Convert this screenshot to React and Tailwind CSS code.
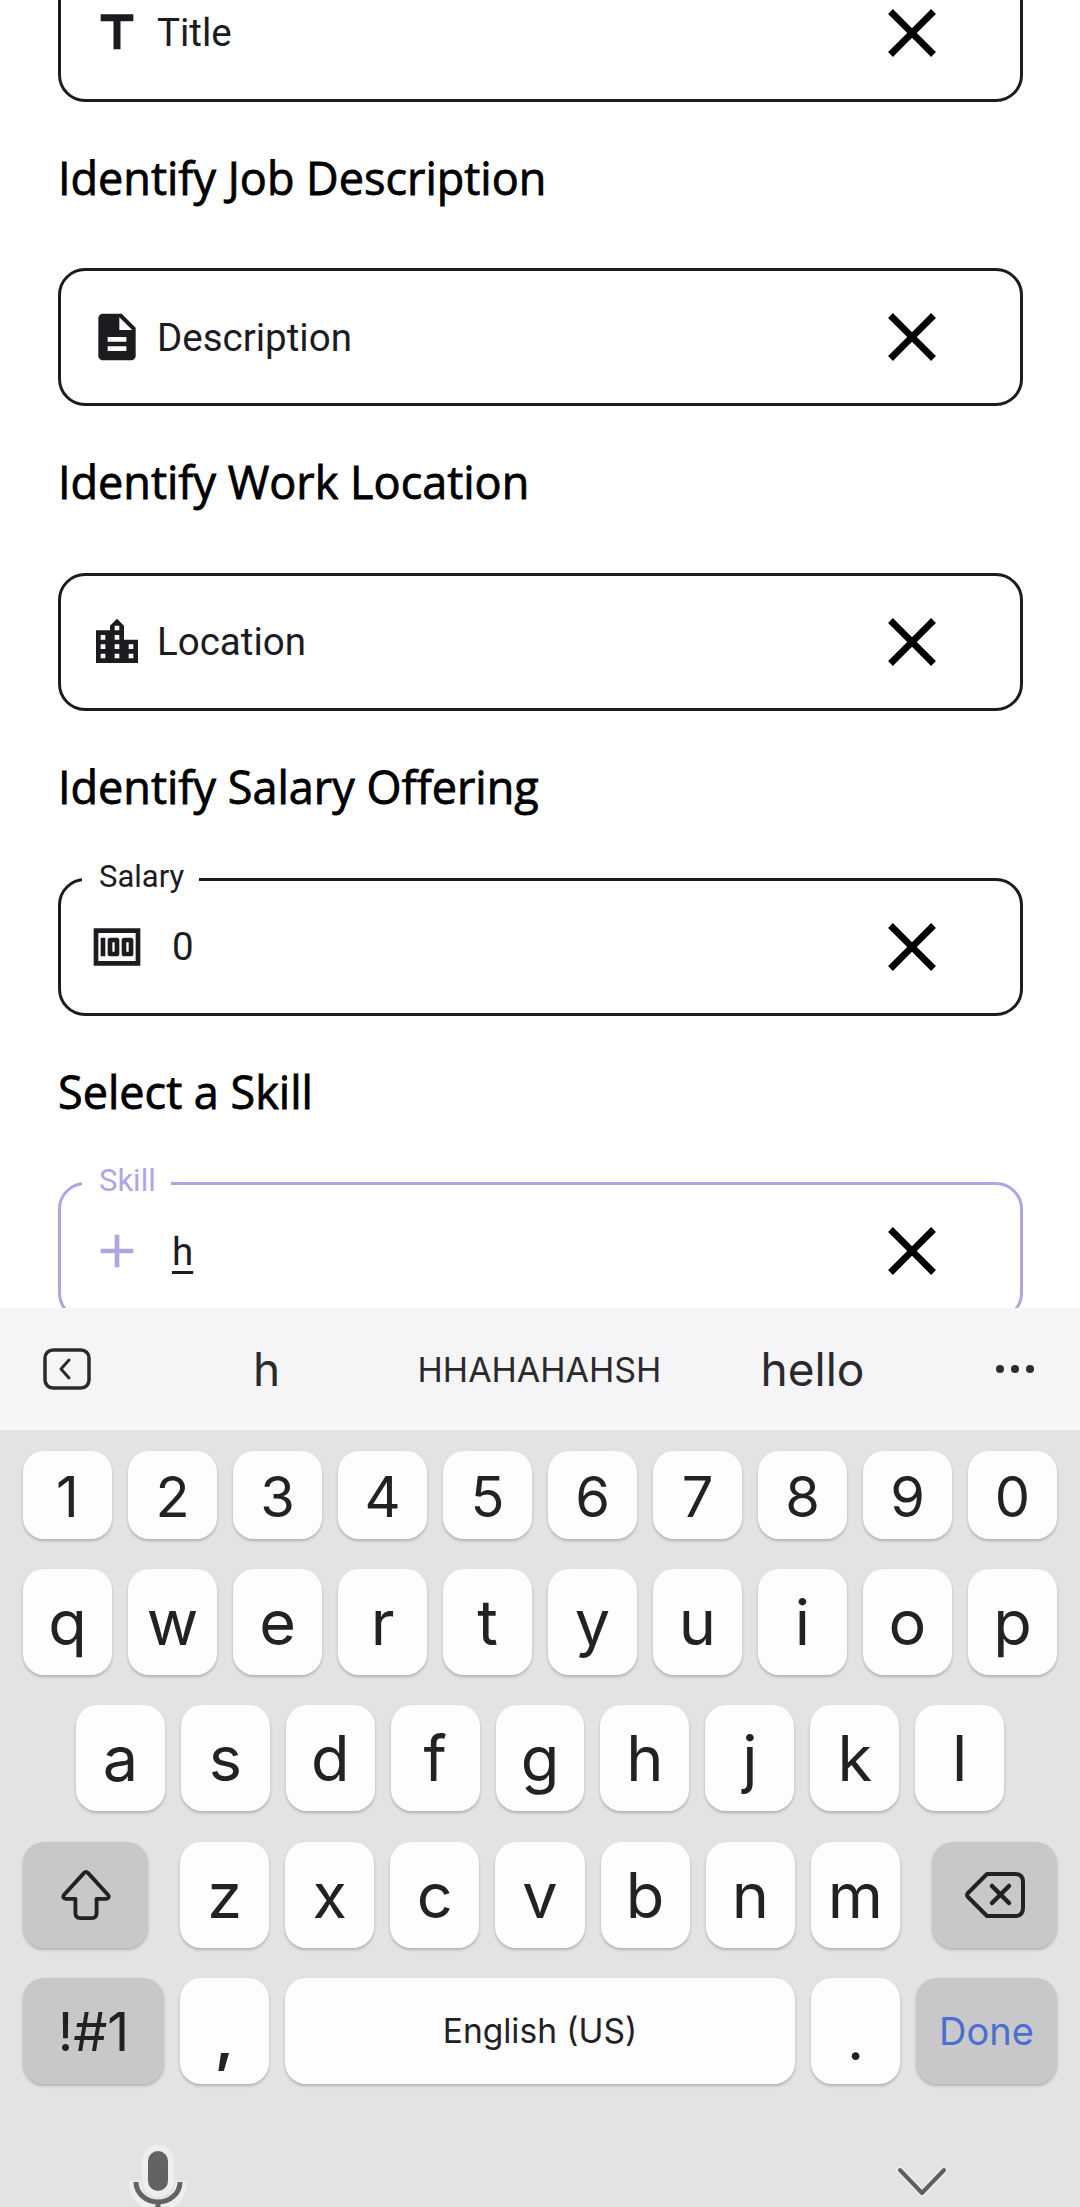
import { MdClose, MdTitle, MdDescription, MdLocationCity, MdMoney, MdAdd } from 'react-icons/md';

function Field({ icon: Icon, text, label, focused, clip }) {
  const isValue = Boolean(label);
  return (
    <div
      className={`relative flex items-center justify-between h-[138px] rounded-[27px] border-[3px] pl-[28px] pr-[67px] ${
        focused ? 'border-[#b0a5e0]' : 'border-[#1c1b1f]'
      }`}
    >
      {label && (
        <span
          className={`absolute left-[21px] top-[-21px] bg-white pl-[17px] pr-[15px] h-[36px] leading-[34px] text-[31px] ${
            focused ? 'text-[#b0a5e0]' : 'text-[#1c1b1f]'
          }`}
        >
          {label}
        </span>
      )}
      <div className="flex items-center">
        <Icon size={56} className={focused ? 'text-[#b0a5e0]' : 'text-[#1c1b1f]'} />
        <span
          className={`text-[38.5px] text-[#1c1b1f] ${isValue ? 'ml-[27px]' : 'ml-[12px]'} ${clip ? 'underline underline-offset-[6px]' : ''}`}
        >
          {text}
        </span>
      </div>
      <MdClose size={82} className="text-black" />
    </div>
  );
}

function Heading({ children }) {
  return (
    <h2 className="h-[166.7px] pt-[46px] text-[45px] leading-[60px] font-medium text-black font-['Open_Sans',sans-serif] [-webkit-text-stroke:0.8px_#000]">
      {children}
    </h2>
  );
}

function Key({ children, className = '', mod }) {
  return (
    <div
      className={`flex items-center justify-center rounded-[21px] text-[#222225] shadow-[0_2px_3px_rgba(0,0,0,0.22)] ${
        mod ? 'bg-[#c8c8ca]' : 'bg-[#fdfdfe]'
      } ${className}`}
    >
      {children}
    </div>
  );
}

function KeyRow({ keys, className }) {
  return (
    <div className={`flex gap-[16px] h-[106px] ${className}`}>
      {keys.map((k) => (
        <Key key={k} className="flex-1 text-[63px]">
          {k}
        </Key>
      ))}
    </div>
  );
}

function ShiftIcon() {
  return (
    <svg width="50" height="52" viewBox="0 0 52 54" fill="none" stroke="#222225" strokeWidth="4" strokeLinejoin="round">
      <path d="M26 3 Q27 3 28 4 L49 27 Q51 30 47 31 H37 V46 Q37 51 32 51 H20 Q15 51 15 46 V31 H5 Q1 30 3 27 L24 4 Q25 3 26 3 Z" />
    </svg>
  );
}

function BackspaceIcon() {
  return (
    <svg width="60" height="46" viewBox="0 0 60 46" fill="none" stroke="#222225" strokeWidth="4" strokeLinejoin="round" strokeLinecap="round">
      <path d="M22 2 H50 Q58 2 58 10 V36 Q58 44 50 44 H22 L3 25 Q1 23 3 21 Z" />
      <path d="M27 14 L44 31 M44 14 L27 31" strokeWidth="4.5" />
    </svg>
  );
}

function MicIcon() {
  return (
    <svg width="60" height="62" viewBox="0 0 60 62">
      <g fill="none" stroke="#eeeeef" strokeWidth="12">
        <rect x="20" y="6" width="20" height="40" rx="10" fill="#eeeeef" />
        <path d="M7 36 V38 A23 23 0 0 0 53 38 V36" />
        <path d="M30 60 V62" />
      </g>
      <rect x="20" y="6" width="20" height="40" rx="10" fill="#636363" />
      <path d="M8 37 A22 20 0 0 0 52 37" fill="none" stroke="#636363" strokeWidth="5" />
      <path d="M30 56 V62" stroke="#636363" strokeWidth="5" />
    </svg>
  );
}

function ChevronIcon() {
  return (
    <svg width="54" height="34" viewBox="0 0 54 34" fill="none" strokeLinecap="round" strokeLinejoin="round">
      <path d="M5 5 L27 28 L49 5" stroke="#eeeeef" strokeWidth="7" />
      <path d="M5 5 L27 28 L49 5" stroke="#5f5f5f" strokeWidth="4" />
    </svg>
  );
}

function Keyboard() {
  return (
    <div className="h-[899px] bg-[#e3e3e5] font-['Inter',sans-serif]">
      {/* Suggestions */}
      <div className="flex items-center h-[122px] bg-[#f5f5f7] text-[#2a2a2d]">
        <div className="w-[130px] pl-[43px]">
          <svg width="48" height="42" viewBox="0 0 48 42" fill="none" stroke="#2c2c2e" strokeWidth="3.5" strokeLinecap="round" strokeLinejoin="round">
            <rect x="2" y="2" width="44" height="38" rx="8" />
            <path d="M26 12 L18 21 L26 30" strokeWidth="3" />
          </svg>
        </div>
        <div className="w-[273px] text-center text-[46px]">h</div>
        <div className="w-[273px] text-center text-[34px]">HHAHAHAHSH</div>
        <div className="w-[273px] text-center text-[46px]">hello</div>
        <div className="flex-1 flex justify-center gap-[7px]">
          <span className="w-[8px] h-[8px] rounded-full bg-[#2c2c2e]" />
          <span className="w-[8px] h-[8px] rounded-full bg-[#2c2c2e]" />
          <span className="w-[8px] h-[8px] rounded-full bg-[#2c2c2e]" />
        </div>
      </div>

      {/* Keys */}
      <div className="flex flex-col pt-[21px]">
        <div className="flex gap-[16px] h-[88px] px-[23px] mb-[30px]">
          {['1', '2', '3', '4', '5', '6', '7', '8', '9', '0'].map((k) => (
            <Key key={k} className="flex-1 text-[56px] pt-[3px]">
              {k}
            </Key>
          ))}
        </div>
        <KeyRow keys={['q', 'w', 'e', 'r', 't', 'y', 'u', 'i', 'o', 'p']} className="px-[23px] mb-[30px]" />
        <KeyRow keys={['a', 's', 'd', 'f', 'g', 'h', 'j', 'k', 'l']} className="px-[76px] mb-[31px]" />
        <div className="flex h-[106px] px-[23px] mb-[30px]">
          <Key mod className="w-[125px]">
            <ShiftIcon />
          </Key>
          <div className="flex-1 flex gap-[16px] mx-[32px]">
            {['z', 'x', 'c', 'v', 'b', 'n', 'm'].map((k) => (
              <Key key={k} className="flex-1 text-[63px]">
                {k}
              </Key>
            ))}
          </div>
          <Key mod className="w-[125px]">
            <BackspaceIcon />
          </Key>
        </div>
        <div className="flex gap-[16px] h-[106px] px-[23px]">
          <Key mod className="w-[141px] text-[54px]">!#1</Key>
          <Key className="w-[89px] text-[61px] font-semibold pt-[16px]">,</Key>
          <Key className="flex-1 text-[33.5px]">English (US)</Key>
          <Key className="w-[89px] text-[58px] pt-[16px]">.</Key>
          <Key mod className="w-[141px] text-[38px] !text-[#4a6fd0]">Done</Key>
        </div>
      </div>

      {/* Nav bar */}
      <div className="flex justify-between items-start pl-[128px] pr-[131px] pt-[61px]">
        <MicIcon />
        <div className="mt-[20px]">
          <ChevronIcon />
        </div>
      </div>
    </div>
  );
}

export default function App() {
  return (
    <div className="w-[1080px] h-[2207px] overflow-hidden bg-white font-['Roboto',sans-serif]">
      <div className="h-[1308px] overflow-hidden">
        <div className="mt-[-36.3px] pl-[58px] pr-[57px]">
          <Field icon={MdTitle} text="Title" />
          <Heading>Identify Job Description</Heading>
          <Field icon={MdDescription} text="Description" />
          <Heading>Identify Work Location</Heading>
          <Field icon={MdLocationCity} text="Location" />
          <Heading>Identify Salary Offering</Heading>
          <Field icon={MdMoney} text="0" label="Salary" />
          <Heading>Select a Skill</Heading>
          <Field icon={MdAdd} text="h" label="Skill" focused clip />
        </div>
      </div>
      <Keyboard />
    </div>
  );
}
